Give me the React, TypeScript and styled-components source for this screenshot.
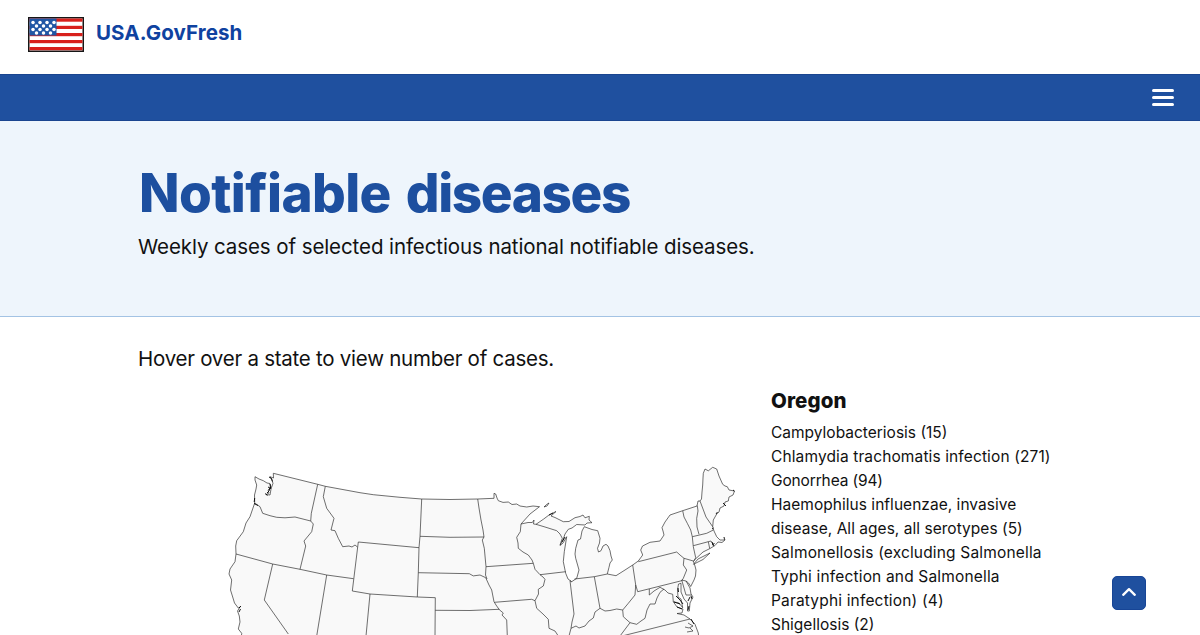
import React from "react";
import styled, { createGlobalStyle } from "styled-components";

const GlobalStyle = createGlobalStyle`
  * { box-sizing: border-box; }
  html, body { margin: 0; height: 635px; overflow: hidden; background: #fff; }
  body { font-family: Inter, "Liberation Sans", sans-serif; color: #111; }
  h1, h2, p, ul { margin: 0; padding: 0; }
`;

const Page = styled.div`
  position: relative;
  height: 635px;
  overflow: hidden;
`;

const Header = styled.header`
  display: flex;
  align-items: center;
  gap: 12px;
  height: 74px;
  padding: 0 28px 5px;
`;

const Brand = styled.a`
  color: #0f42a0;
  font-size: 20.5px;
  font-weight: 700;
  line-height: 24px;
  letter-spacing: 0.1px;
  margin-top: -4px;
`;

const NavBar = styled.nav`
  display: flex;
  align-items: center;
  justify-content: flex-end;
  height: 47px;
  padding-right: 26px;
  background: #1f509f;
  border-top: 1px solid #1a4590;
  border-bottom: 1px solid #1a4590;
`;

const MenuButton = styled.button`
  display: flex;
  flex-direction: column;
  gap: 4px;
  width: 22px;
  padding: 0;
  border: 0;
  background: none;
`;

const MenuLine = styled.span`
  height: 3px;
  border-radius: 1.5px;
  background: #fff;
`;

const Hero = styled.section`
  height: 196px;
  padding: 40px 138px 0;
  background: #eef5fc;
  border-bottom: 1px solid #a3c3e4;
`;

const Title = styled.h1`
  display: flex;
  gap: 15px;
  padding-left: 1px;
  color: #1d4f9f;
  font-size: 53px;
  font-weight: 800;
  line-height: 64px;
  white-space: nowrap;
`;

const TitleWord = styled.span<{ $spacing: number }>`
  letter-spacing: ${(p) => p.$spacing}px;
`;

const Lead = styled.p<{ $spacing: number }>`
  font-size: 20.5px;
  line-height: 32px;
  letter-spacing: ${(p) => p.$spacing}px;
  white-space: nowrap;
`;

const HeroLead = styled(Lead)`
  margin-top: 6px;
`;

const Content = styled.main`
  padding: 26px 138px 0;
`;

const Columns = styled.div`
  display: grid;
  grid-template-columns: 603px 291px;
  column-gap: 30px;
  margin-top: 14px;
`;

const MapSvg = styled.svg`
  display: block;
  width: 603px;
  height: 250px;
`;

const StateName = styled.h2`
  font-size: 20.5px;
  font-weight: 800;
  line-height: 24px;
  letter-spacing: 0.1px;
  margin-bottom: 8px;
`;

const DiseaseList = styled.ul`
  list-style: none;
`;

const Disease = styled.li<{ $spacing?: number }>`
  font-size: 15.5px;
  line-height: 24px;
  letter-spacing: ${(p) => p.$spacing ?? 0}px;
`;

const TopButton = styled.button`
  position: absolute;
  left: 1112px;
  top: 576px;
  display: flex;
  align-items: center;
  justify-content: center;
  width: 34px;
  height: 34px;
  padding: 0 0 2px;
  border: 1px solid #174596;
  border-radius: 5px;
  background: #1f509f;
`;

const starRows = [
  { y: 5.5, xs: [5, 12, 19, 26] },
  { y: 9, xs: [8.5, 15.5, 22.5] },
  { y: 12.5, xs: [5, 12, 19, 26] },
  { y: 16, xs: [8.5, 15.5, 22.5] },
];

const Flag = () => (
  <svg width="56" height="35" viewBox="0 0 56 35">
    <rect width="56" height="35" fill="#161616" />
    <rect x="1.5" y="1.5" width="53" height="32" fill="#fff" />
    {[1.5, 8.8, 16, 23, 30].map((y) => (
      <rect key={y} x="1.5" y={y} width="53" height="3.2" fill="#d8201c" />
    ))}
    <rect x="1.5" y="1.5" width="27" height="17" fill="#2056a4" />
    {starRows.map((row) =>
      row.xs.map((x) => <circle key={`${x}-${row.y}`} cx={x} cy={row.y} r="1.75" fill="#fff" />)
    )}
  </svg>
);

const land =
  "M255 476.7L259 479L263.3 480.7L267 483L270 483.5L271 487L268 490L269 493L266 494.5L270 495L271 489L273 483.3L271.5 479L270 476.7L273.5 478L273.3 473.3L317.7 484.3L325.3 486.3L360 492.7L373.3 494.7L400 497.3L421.7 499L450 499.5L477.7 499L494 498.3L494 493.3L495.7 494L497 498L498.3 500.7L503 502.4L508.3 502L512 504.5L516.7 504L520 506L526.7 507L533 506L539.5 506.7L530 514L521 524L528 522.5L532.3 522.5L534 520L533.5 524L536 524.3L543.3 519.3L549 515L556 511.5L551 516L555 517.5L563.3 521.7L569 521.5L575 517.7L580 516.5L583 515L585 517.8L589.3 516.3L589 520L592 522.7L587 523L585 525L576.7 524.5L572 528L568.3 529.3L565 534L563.3 539L560 545.5L563 543L566.7 536.7L564.3 551.7L563.3 561.7L565.7 573.3L568 579L571.7 581.7L576.7 578.3L579 570L575.7 558.3L575 554L575.7 548.3L578 540L580.5 539L582 531L584.3 526.7L592 529.5L597.7 530.7L600 538.3L599.5 543L597.5 548.3L598.5 552L601 550.7L603 546L606 544.3L608 546L610 550.7L611 556L612.3 560L610 563L609 567.3L607.3 574L616 575.7L625 570L632.7 565L638.3 561L642.7 555L640.7 550L642.5 546L650 542.3L660 541L664 535L663 531L662 527.7L665 522L670 515L682.7 510.7L697 506L698 501L700 501L701.5 499L702 492L702.7 485L703 478L703.3 473.3L705 469L708.3 470.8L712.7 467.3L716.7 469L719 476L722.7 484.3L725 486L727.3 486.7L729 490L734.5 491L733 495L729 497L728.3 501L725 502L724 506L720 508L719 512L716.7 514L713.3 520L712.7 526.7L714 531L716.7 536.7L720 540L724.5 540L724 537L725 540L722 542.5L718 542L715 545.5L710 548.5L703 552L696 558.5L693.3 561L695 566L696 570L695.5 576L694 580L690.7 586.5L688.5 583L686 581L690 588L691 594L693 597L690 603L689.3 611L687.5 611L687.5 603L684 599L681 592L681 583.3L678.5 584L677.5 590L678 597L681 599L682.7 607.7L679 603L673.3 601.7L677 607L683 609L682 613L677 613.5L684 615L690 619L695 624.3L698.3 633L699 640L241 640L241.7 633.3L238.3 629L240 622L239.3 616L237.5 611L240 607L238.3 608L234.5 603L232.7 597L230.5 590L231.7 580L229 574L230 569L235 561.7L236 554L235.7 546L236.7 540.7L243.3 531.7L246 523L250 516.7L254.7 503L254.5 495L256 489L256.7 485L255 480Z";

const borders = [
  // Pacific Northwest
  "M254.7 503L260 506.7L262.7 513.3L270 515.7L276.7 517.3L285 517.8L295 517L310.7 521L313.3 524L311.7 531.7L304 541L305.7 546L300 569.3",
  "M317.7 484.3L311.3 513.3L310.7 521",
  "M325.3 486.3L323.3 496.7L326.7 508.3L334 518.3L331 530L335 530.7L338.3 538.3L342.7 546.7L349 546L352 547L355 545L357.5 547",
  // Great Basin and Rockies
  "M236 554L272.7 564L300 569.3L326.7 575L353.5 578.7",
  "M272.7 564L264.3 600L288.3 634",
  "M326.7 575L316.7 636",
  "M419 547.7L358.3 542L352.3 591L370 594L417.3 597L435.3 597.7L435 636",
  "M370 594L366 636",
  // Plains
  "M421.7 499L420 536.3L419 547.7L418.3 572.7L417.3 597",
  "M420 536.3L450 537.3L484 537",
  "M477.7 499L479 508L481 520L483 530L484 537L482.3 540L484.3 548.3L486 566.7L485.5 575L487 579",
  "M418.3 572.7L469.3 573.7L473.3 575.9L480 575L485.7 577.7L489 585L491.7 590L494 601.7L496 605L499.3 609.7L503.3 613L502 615L506.7 620L507.3 636",
  "M435.3 610.3L470 610.5L499.3 609.3",
  // Upper Midwest
  "M521 524L520.3 531.7L516.7 537.3L518 543L518.3 548.3L523 552L528.3 555L532 560L533.3 563.3L535 569.3L540 574.7L543 577L545 579.3L543.3 586L538.3 589.3L538.5 594L535 600.7L536.7 608.3L543 614L548.3 619.3L549 628.3L555 631L558.3 636",
  "M486 566.7L533.3 563.3",
  "M494.5 602.3L531.7 599.3L535 600.7",
  "M540 574.7L565.7 571.7",
  "M536 524.3L545 527L556.7 530.7L560 534L562.3 538.3L560 545",
  "M571.7 581.7L570 580.7L574 614L572 622L571 628.3L569 636",
  "M574.5 579L594.3 576.7L607.3 574",
  "M594.3 576.7L600 608.3",
  "M571 628.3L576 626L579 628L585 626L589 621L593.3 618L595 612L600 608.3L605 611L610 610.5L616.7 609L622.7 610L628.3 603.3L635 595L635.7 585L632.7 565",
  // Appalachia and mid-Atlantic
  "M635.7 585L637.7 591.7L681.7 580.7L683.3 578.3L686.7 570L683.3 565L684 558.3L680 555L676.7 552L638.3 561.7",
  "M622.7 610L623.3 616.7L630 622.7L636.7 624.3L641 621L645 618.3L647 610L650 604L655 604L657 598L660 592.3L664 589",
  "M649.3 589L649.3 595L654 591L660 587.3L665 590L668 593L672.7 594.3L673.3 601.7",
  "M630 622.7L620 636",
  "M622 636L650 629L690 619",
  "M681.7 580L686 595L691.7 595",
  "M681.7 580L686 581",
  "M684 558.3L693.3 561",
  // New England
  "M682.7 510.7L684 517L687.3 523.3L690.7 530L692.3 536.7L693.3 546.7L695.7 557.7L694 561",
  "M692.3 536.7L706.7 533.3L713.3 530",
  "M697.3 505.7L698 511L696.7 518.3L697 527L699 534.3",
  "M700 501L706 517L712.7 526.7",
  "M693.3 545.7L708.3 541.7L711 541L713.5 545",
  "M708.3 541.7L709.7 548.5",
];

const islands = [
  "M544 507L546.5 504.5L549 503L547 506Z",
  "M693.5 564.3L698 559L704 556L710 553L703 559.5Z",
  "M688 623L693 626L689 628L685 627M690 628L693 631L687 632",
];

// Small inlets and barrier islands that read as dense ink at this scale
const inlets =
  "M269 477l2.5 1.5l1 3M268 487l2 1l-1 3l-2 2M270 484l.7 5M265 493.5l2.5 2M254.7 498l-.5 4M254 503.5l4 2M239 608l2 -2M239 612l1.5 -3M549 515l4 -2M562 542l3 -5M733 490l1.4 1M723 503l3 3M716 514l1.5 -2M712 529l1.5 -1M712 542l1.5 4M714.5 543l-2 2M678 588l.5 4M676 596l4 4M674 602l6 2M680 600l3 4M688 601l2 -4M689 606l-1 4M691 619l3 5M677 607l5 2M691 596l1 3";

const StateMap = () => (
  <MapSvg viewBox="138 389 603 250">
    <g stroke="#222" strokeWidth="0.65" strokeLinejoin="round" fill="none">
      <path d={land} fill="#f9f9f9" />
      {borders.map((d) => (
        <path key={d} d={d} />
      ))}
      {islands.map((d) => (
        <path key={d} d={d} fill="#f9f9f9" />
      ))}
      <path d={inlets} stroke="#000" strokeWidth="0.9" />
    </g>
  </MapSvg>
);

const diseases = [
  { label: "Campylobacteriosis (15)", spacing: 0 },
  { label: "Chlamydia trachomatis infection (271)", spacing: 0.12 },
  { label: "Gonorrhea (94)", spacing: -0.14 },
  { label: "Haemophilus influenzae, invasive disease, All ages, all serotypes (5)", spacing: 0.03 },
  { label: "Salmonellosis (excluding Salmonella Typhi infection and Salmonella Paratyphi infection) (4)", spacing: 0.17 },
  { label: "Shigellosis (2)", spacing: 0 },
];

export default function App() {
  return (
    <Page>
      <GlobalStyle />
      <Header>
        <Flag />
        <Brand>USA.GovFresh</Brand>
      </Header>
      <NavBar>
        <MenuButton aria-label="Menu">
          <MenuLine />
          <MenuLine />
          <MenuLine />
        </MenuButton>
      </NavBar>
      <Hero>
        <Title>
          <TitleWord $spacing={-0.6}>Notifiable</TitleWord>
          <TitleWord $spacing={-1.4}>diseases</TitleWord>
        </Title>
        <HeroLead $spacing={-0.09}>Weekly cases of selected infectious national notifiable diseases.</HeroLead>
      </Hero>
      <Content>
        <Lead $spacing={-0.25}>Hover over a state to view number of cases.</Lead>
        <Columns>
          <StateMap />
          <div>
            <StateName>Oregon</StateName>
            <DiseaseList>
              {diseases.map((d) => (
                <Disease key={d.label} $spacing={d.spacing}>
                  {d.label}
                </Disease>
              ))}
            </DiseaseList>
          </div>
        </Columns>
      </Content>
      <TopButton aria-label="Back to top">
        <svg width="16" height="10" viewBox="0 0 16 10">
          <path d="M2.2 7.8L8 2.2L13.8 7.8" fill="none" stroke="#fff" strokeWidth="2.3" strokeLinecap="round" strokeLinejoin="round" />
        </svg>
      </TopButton>
    </Page>
  );
}
